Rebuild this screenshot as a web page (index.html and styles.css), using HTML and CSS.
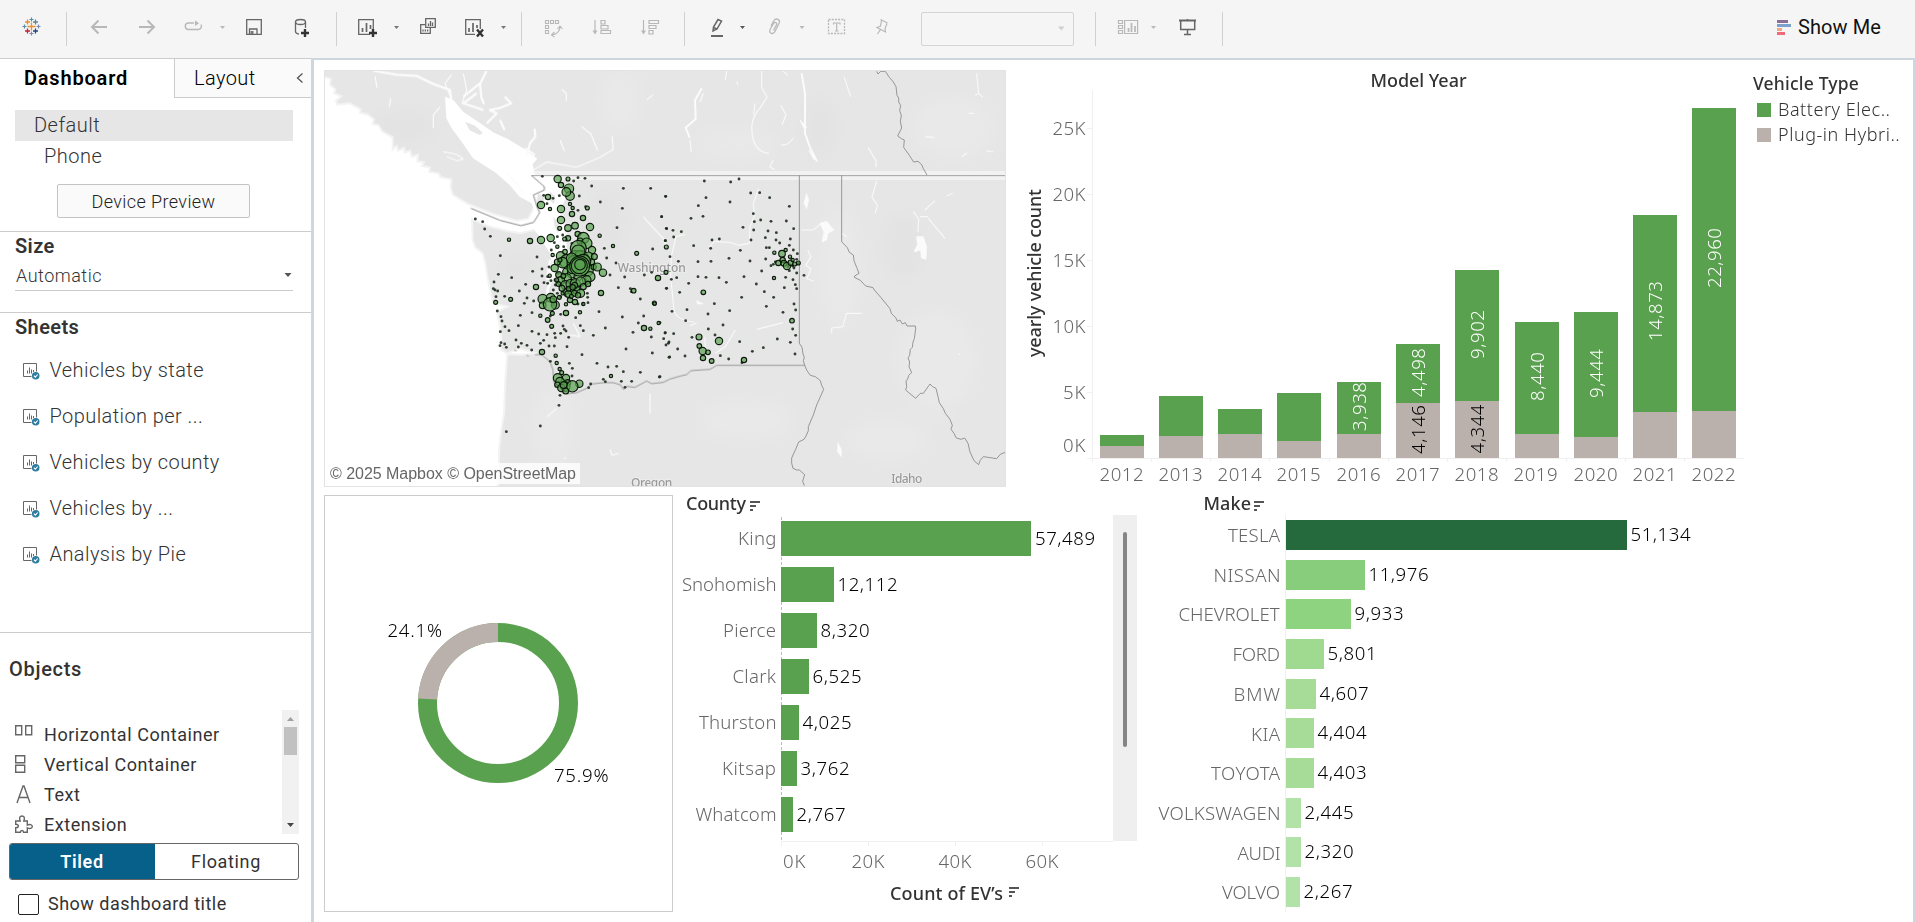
FILE: index.html
```html
<!DOCTYPE html>
<html lang="en">
<head>
<meta charset="utf-8">
<title>EV Dashboard</title>
<link rel="stylesheet" href="styles.css">
</head>
<body>
<header class="toolbar">
  <svg class="tool" width="66" height="58" viewBox="0 0 66 58" fill="none" stroke-width="1.6">
    <path stroke="#eb912c" d="M31.5 22.500v8M27.500 26.500h8"/>
    <path stroke="#eb912c" d="M27.500 19.500v5M25 22h5"/><path stroke="#59879b" d="M35.500 19.500v5M33 22h5"/>
    <path stroke="#c72035" d="M27.500 28.500v5M25 31h5"/><path stroke="#1f457e" d="M35.500 28.500v5M33 31h5"/>
    <path stroke="#5b8fa5" stroke-width="1.2" d="M31.500 17.500v4M29.500 19.500h4M24.500 24.500v4M22.500 26.500h4"/>
    <path stroke="#7d8bb0" stroke-width="1.2" d="M31.500 31.500v4M29.500 33.500h4M38.500 24.500v4M36.500 26.500h4"/>
  </svg>
  <i class="sep"></i>
  <svg class="tool faint" width="54" height="58" viewBox="67 0 54 58"><path stroke-width="2" d="M107 27H92M98.500 20.500L92 27l6.500 6.500"/></svg>
  <svg class="tool faint" width="49" height="58" viewBox="121 0 49 58"><path stroke-width="2" d="M139 27h15M147.500 20.500L154 27l-6.500 6.500"/></svg>
  <svg class="tool faint" width="62" height="58" viewBox="170 0 62 58"><path stroke-width="1.400" d="M194 23h-6a3.300 3.300 0 0 0 0 6.500h10a3.300 3.300 0 0 0 3-5"/><path class="solid" d="M193.500 23h2M195 20.300l4 2.900-4 2.900zM220 26h5l-2.500 3z"/></svg>
  <svg class="tool" width="46" height="58" viewBox="232 0 46 58"><path d="M246.700 19.700h14.600v14.600h-14.600zM249.500 34v-5h7.500v5"/><path class="solid" d="M250.500 31h3v3h-3z"/></svg>
  <svg class="tool" width="58" height="58" viewBox="278 0 58 58"><ellipse cx="300.500" cy="22" rx="5" ry="2.500"/><path d="M295.500 22v9.500q0 2 3.500 2.700M305.500 22v6"/><path class="ink" d="M305 29v8M301 33h8"/></svg>
  <i class="sep"></i>
  <svg class="tool" width="72" height="58" viewBox="337 0 72 58"><path d="M370 34.300h-11.300V19.700h14.600V29"/><path stroke-width="1.700" d="M362.500 32v-4M366.500 32v-9M370.500 29v-4"/><path class="ink" d="M373 29v8M369 33h8"/><path class="solid" d="M394 26h5l-2.500 3z"/></svg>
  <svg class="tool" width="42" height="58" viewBox="409 0 42 58"><path d="M425.700 18.700h9.600v8.600h-9.600zM425 24.700h-4.300v8.600h9.600V28"/><path d="M428.500 26v-2.500M430.500 26v-5M432.500 26v-3.500M423 31.500v-2M425.300 31.500v-2M427.600 31.500v-2"/></svg>
  <svg class="tool" width="70" height="58" viewBox="451 0 70 58"><path d="M475 34.300h-9.300V19.700h14.600V29"/><path stroke-width="1.700" d="M469 32v-4M473 32v-9M477 28v-3"/><path class="ink" d="M477 29.500l6 7M483 29.500l-6 7"/><path class="solid" d="M501 26h5l-2.500 3z"/></svg>
  <i class="sep"></i>
  <svg class="tool faint" width="56" height="58" viewBox="522 0 56 58"><path stroke-width="1.100" d="M545.500 20.500h3v3h-3zM550.500 20.500h3v3h-3zM555.500 20.500h3v3h-3zM545.500 25.500h3v3h-3zM545.500 30.500h3v3h-3zM560 26.500q0 7-8 8.500M557.500 29l2.500-3 2.500 3M554.500 32l-3 3 3 2"/></svg>
  <svg class="tool faint" width="48" height="58" viewBox="578 0 48 58"><path stroke-width="1.200" d="M595 20v12M601 20.500h4v3.500h-4zM601 25.500h7v3.500h-7zM601 30.500h9.500v3h-9.500z"/><path class="solid" d="M592.500 30.500h5l-2.500 4z"/></svg>
  <svg class="tool faint" width="58" height="58" viewBox="626 0 58 58"><path stroke-width="1.200" d="M643.500 20v12M649 20.500h9.500v3H649zM649 25.500h7v3h-7zM649 30.500h4v3.500h-4z"/><path class="solid" d="M641 30.500h5l-2.500 4z"/></svg>
  <i class="sep"></i>
  <svg class="tool" width="70" height="58" viewBox="685 0 70 58"><path stroke-width="1.500" d="M713 31l.5-4 4.500-7.500 3.500 1.500-4.500 8zM713.500 27.500l3.500 1.500"/><path class="base" d="M711 36h12"/><path class="solid dark" d="M740 26h5l-2.500 3z"/></svg>
  <svg class="tool faint" width="60" height="58" viewBox="755 0 60 58"><path stroke-width="1.300" d="M771 26l3-5.500c2-3 6.500-1 5.300 2.300L775 31.500c-1.800 3.500-6.500 2-5-1.700l3.500-6.300c1.500-2 4-.8 3 1.400l-3 5.600"/><path class="solid" d="M799.500 26h5l-2.500 3z"/></svg>
  <svg class="tool faint" width="46" height="58" viewBox="815 0 46 58"><path stroke-dasharray="2 1.200" d="M828.500 19.500h16v14h-16z"/><path stroke-width="1.200" d="M833.500 24.500v-1.500h6.500v1.500M836.700 23v8M835 31h3.500"/></svg>
  <svg class="tool faint" width="60" height="58" viewBox="861 0 60 58"><path stroke-width="1.200" d="M880.500 19.500l7 3.500M881.500 20.500l-1 5.500-3.500 1.500 8.500 4.500-.5-3.500 2-5M880.500 29.500l-3 4.500"/></svg>
  <span class="fit-select"><svg class="tool faint" width="12" height="30" viewBox="0 0 12 30"><path class="solid" d="M3 12.500h6.500l-3.200 4z" opacity=".6"/></svg></span>
  <i class="sep gap-left"></i>
  <svg class="tool faint" width="70" height="58" viewBox="1096 0 70 58"><path stroke-width="1.200" d="M1118.500 20.500h4v3h-4zM1118.500 25.500h4v3h-4zM1118.500 30.500h4v3h-4zM1124.600 20.500h13v13h-13z"/><path stroke-width="1.700" d="M1128.500 32v-4M1131.500 32v-9M1135 32v-6"/><path class="solid" d="M1151 26h5l-2.500 3z"/></svg>
  <svg class="tool" width="56" height="58" viewBox="1166 0 56 58"><path stroke-width="2" d="M1179 20.500h17"/><path stroke-width="1.500" d="M1180.700 21v8.500h14V21M1187.500 19v2M1187.500 30v4.500M1184 34.500h7"/></svg>
  <i class="sep"></i>
  <div class="show-me">
    <svg width="14" height="15" viewBox="0 0 14 15"><path fill="#8b6f97" d="M0 0h11v3H0z"/><path fill="#7ba2cc" d="M0 4h14v3H0z"/><path fill="#f2a67e" d="M0 8h5v3H0z"/><path fill="#f06a7c" d="M0 12h8v3H0z"/></svg>
    <span>Show Me</span>
  </div>
</header>
<div class="workspace">
  <aside class="side">
    <div class="tabs"><b class="tab-on">Dashboard</b><div class="tab-off"><span>Layout</span><svg width="8" height="12" viewBox="0 0 8 12"><path fill="none" stroke="#555" stroke-width="1.300" d="M6.500 1.500L1.500 6l5 4.500"/></svg></div></div>
    <section class="devices">
      <div class="device on">Default</div>
      <div class="device phone">Phone</div>
      <button class="preview">Device Preview</button>
    </section>
    <section class="size">
      <h3>Size</h3>
      <div class="dropdown"><span>Automatic</span><svg width="8" height="6" viewBox="0 0 8 6"><path fill="#555" d="M.5 1h7L4 5z"/></svg></div>
    </section>
    <section class="sheets">
      <h3>Sheets</h3>
      <ul>
        <li><svg class="sheet"><use href="#sheet"/></svg><span>Vehicles by state</span></li>
        <li><svg class="sheet"><use href="#sheet"/></svg><span>Population per ...</span></li>
        <li><svg class="sheet"><use href="#sheet"/></svg><span>Vehicles by county</span></li>
        <li><svg class="sheet"><use href="#sheet"/></svg><span>Vehicles by ...</span></li>
        <li><svg class="sheet"><use href="#sheet"/></svg><span>Analysis by Pie</span></li>
      </ul>
    </section>
    <section class="objects">
      <h3>Objects</h3>
      <div class="object-box">
        <ul>
          <li><svg class="obj" viewBox="0 0 20 20"><path d="M1.700 1.700h6v9h-6zM11.700 1.700h6v9h-6z"/></svg>Horizontal Container</li>
          <li><svg class="obj" viewBox="0 0 20 20"><path d="M1.700 1.700h9v7h-9zM1.700 11.200h9v7h-9z"/></svg>Vertical Container</li>
          <li><svg class="obj" viewBox="0 0 20 20"><path d="M3 19l6-17h1l6 17M5 13.500h9"/></svg>Text</li>
          <li><svg class="obj" viewBox="0 0 20 20"><path d="M1.700 8V7h4.500c-1.500-3.500 0-5 1.800-5s3.300 1.500 1.800 5h3.500v4.200c2.500-1.200 5-.6 5 1.300s-2.500 2.500-5 1.300V18.300H9.600c0-2.500-3.200-2.500-3.200 0H1.700v-4.500c3.500 0 3.500-3.600 0-3.600z"/></svg>Extension</li>
        </ul>
        <div class="scroll"><svg width="17" height="17" viewBox="0 0 17 17"><path fill="#a0a0a0" d="M5 11h7L8.500 7z"/></svg><i></i><svg width="17" height="17" viewBox="0 0 17 17"><path fill="#444" d="M5 6h7l-3.500 4z"/></svg></div>
      </div>
      <div class="mode"><b>Tiled</b><span>Floating</span></div>
      <label class="check"><i></i><span>Show dashboard title</span></label>
    </section>
  </aside>
  <main class="canvas">
    <div class="row">
      <svg class="map" width="682" height="417" viewBox="12 30 2046 1251">
        <defs><filter id="soft"><feGaussianBlur stdDeviation="24"/></filter><filter id="edge"><feGaussianBlur stdDeviation="1.500"/></filter></defs>
        <path fill="#e6e6e6" d="M12 30h2046v1251H12z"/>
        <g filter="url(#soft)" fill="#e9e9e9"><ellipse cx="900" cy="120" rx="60" ry="90"/><ellipse cx="1250" cy="250" rx="120" ry="40"/><ellipse cx="1560" cy="620" rx="60" ry="180"/><ellipse cx="1900" cy="200" rx="120" ry="90"/><ellipse cx="1850" cy="900" rx="120" ry="150"/><ellipse cx="1280" cy="1080" rx="140" ry="60"/><ellipse cx="1700" cy="1140" rx="130" ry="60"/><ellipse cx="700" cy="1100" rx="60" ry="120"/></g>
        <g filter="url(#soft)" fill="#e3e3e3"><ellipse cx="250" cy="200" rx="100" ry="50"/><ellipse cx="600" cy="620" rx="50" ry="50"/><ellipse cx="860" cy="480" rx="60" ry="100"/><ellipse cx="1500" cy="200" rx="50" ry="90"/><ellipse cx="1750" cy="560" rx="60" ry="100"/></g>
        <path fill="#f2f2f2" d="M640 333h1418v27H640z"/>
        <path fill="#fff" stroke="#f3f3f3" stroke-width="6" filter="url(#edge)" d="M0 48L32 56 30 74 46 88 42 100 64 108 48 122 52 134 90 130 100 136 122 148 120 158 144 164 162 178 158 192 176 196 186 214 218 232V268L230 258 234 272 252 264 254 278 270 272 276 290 294 284 292 304 312 306 306 318 330 322 328 336 356 340 362 352 394 358 392 380 398 404 440 430 480 446 520 462 590 482 625 476 645 436 700 430 730 470 740 530 700 545 690 570 672 530 640 510 600 520 560 512 510 500 470 484 456 478 458 540 466 562 488 580 496 610 502 650 512 700 520 730 562 740 530 756 538 790 544 830 542 868 560 880 600 866 650 880 600 884 562 882 556 960 552 1060 544 1110 538 1160 534 1285H0z"/>
        <path fill="#fff" filter="url(#edge)" d="M375 110l25 10 30 36 42 28 50 34 40 18 50 30 40 30-14 16 6 32 70 6 26 60-26 50 24 70 2 30 6 50-46 30-10-60-50-80 5-40-10-30-36-20-30-35-40-35-30-20-40-25-34-50-30-40-16-30z"/>
        <path fill="#e6e6e6" d="M435 185l30 12 24 22-10 6-30-14zM520 200l30 14-8 10-24-8zM655 400l20 12-6 20-20-8zM690 395l16 14-4 24-14-14zM700 470l18 20-4 30-10-20z"/>
        <g fill="none" stroke="#fbfbfb" stroke-linejoin="round" filter="url(#edge)">
          <path stroke-width="7" d="M160 32l70 12 60 4 50 24 50 18 4 30M500 32l-20 40 4 40 8 20M470 100l-40 30 60 20M500 190l30-30-20-10 30-6 34-14-20-20M540 180l14 30M480 70l-50 40M620 290l10-40 16-20-2-24M645 285l-30-20"/>
          <path stroke-width="3.500" d="M395 120l-20-50 20-26M430 40l10 50-14 40M340 205v-40l20-24M380 290l30 12 20-4M370 275l40 8 20 14M165 48l6 36M212 115l-4 26M640 330l40-24 90 16 70-30 40-24-4-40M785 200l28 22 20 50M720 240l14 34M725 88l14 12v24M980 120l20-16M970 470l36 40 28 30 4 20M560 335l50 60M680 1070l30-24M740 1195l-10 0M870 1168l6 18 20-6M990 1000v60M760 790l20 40-30-6"/>
          <path stroke-width="8" d="M720 540l-6 60-16 50-16 40 6 30M705 650l-16-20M735 560l14 40M690 600l-8 60M730 640l10 40"/>
          <g transform="translate(1020)">
            <path stroke-width="6" d="M125 85l-20 36 2 56-30 26 12 30M425 40l10 60v120l14 40 22 44"/>
            <path stroke-width="3.500" stroke="#f8f8f8" d="M130 100l-10 26M90 240l4 36M305 32v50l16 30-22 34q-30 30-22 80 8 50 50 54M285 130l-4 34M362 135l16 30-12 30M368 32l16 14M230 64l4 12M200 32l-4 28M340 300l-10 20 14 10M400 234q-16 24-36 20M624 262l24 40v20M950 40l6 60-10 6M955 100l14 12M552 50l20 60M905 290l16-12M980 272l20 4M650 362l-14 50 16 24-6 24M795 450l30-28M760 455l16 22-2 40M780 470h24M805 475l50 60M860 408l18-8M796 230l26 2M926 160h16M296 386l-16 44 4 36-14 34-2 50-34 6-20-8-50-4-16 16M424 510h36l26-22M74 524l-26 6-14 60-2 60 10 100q6 30 60 36M110 788l-20 10M226 810l-30 50-30 20M134 830l4 60M605 760h-46l-10 40-34 4v16M290 808l80-20M895 884l6-4M443 570l10 20-16 26 16 10-12 30 20 8M545 520l16 10"/>
            <path fill="#fbfbfb" stroke-width="2" d="M770 530h20l10 30-2 38-14-4-2-24-20 6 10-22zM480 490l20-6 22 26-18 10-4 20-14 6 6-30zM110 722l20 10h-18zM534 1148l10 20v22l-12-16zM440 400l6 20-6 26-8-16zM420 180l20 20-6 10zM446 270l20 20-4 10z"/>
          </g>
        </g>
        <g fill="none" stroke="#858585" stroke-width="3" stroke-linejoin="round">
          <path d="M453 445L540 481 603 497 641 487 659 458 651 440 640 405 673 390V380L634 346H2058"/>
          <path stroke-width="2.500" d="M583 870l6 3M620 886l6 2M645 884H665L690 905 699 930 701 965 715 990 740 1001 770 998 800 985 815 972 850 968H880L902 975 910 988 920 979 945 982 980 963 995 971 1030 967 1050 957 1085 947 1100 944 1112 932 1170 928 1190 916H1454"/>
          <g transform="translate(1020)" stroke-width="2.500">
            <path d="M418 346V850L426 862 429 882 433 892 430 902 434 916 441 932 451 946 466 950 481 962 485 976 491 988 483 1006 470 1035 460 1065 445 1100V1112L438 1128 432 1138 416 1146 407 1168 395 1194V1210L399 1225 410 1230H418L434 1244 428 1264 433 1277"/>
            <path d="M545 346V545L562 563 568 577 580 585 582 602 590 622 597 640 584 648 583 652 601 661 617 678 639 683 643 690 664 714 690 746 694 760 708 774 712 784 720 780 727 792 736 788 741 798H766L767 806 763 836 759 846 757 862 751 868 749 886 744 894 749 906 747 920 755 938 746 946 743 958 738 962 740 980 737 990 745 997 767 1015 781 1000H790L810 972 818 980 828 985 834 1010 838 1028 850 1046 856 1060 870 1078 877 1096 873 1108 882 1120 889 1134 903 1138 914 1134 924 1150 930 1176 942 1202 956 1214 960 1202 970 1190 984 1192 1010 1196 1022 1182 1036 1177"/>
            <path d="M650 34L654 42 662 34H676L688 52 700 66 708 80 711 106 716 114V126L722 136 719 152 724 166 721 184 725 204 713 228 724 236 733 240 731 262 748 286 761 306 774 304 785 314 790 326 801 345"/>
          </g>
        </g>
        <g class="place"><text x="893" y="637" textLength="204">Washington</text><text x="933" y="1281" textLength="124">Oregon</text><text x="1714" y="1268" textLength="93">Idaho</text></g>
        <g id="marks"></g>
        <path fill="#fff" fill-opacity=".8" d="M22 1209h758v63H22z"/>
        <text class="credit" x="30" y="1257" textLength="738">© 2025 Mapbox © OpenStreetMap</text>
        <path fill="none" stroke="#e3e3e3" stroke-width="3" d="M13.500 31.500h2043v1248h-2043z"/>
      </svg>
      <svg class="chart" width="738" height="417" viewBox="1006 70 738 417">
        <g class="axis-line"><path d="M1092.500 90v369M1087 458.500h656.500M1087 128.500h5M1087 194.500h5M1087 260.500h5M1087 326.500h5M1087 392.500h5M1092.500 458v4M1151.500 458v4M1210.500 458v4M1269.500 458v4M1329.500 458v4M1388.500 458v4M1447.500 458v4M1506.500 458v4M1566.500 458v4M1625.500 458v4M1684.500 458v4"/></g>
        <path class="ev" d="M1100 435h44v11h-44zM1159 396h44v40h-44zM1218 409h44v25h-44zM1277 393h44v48h-44zM1337 382h44v52h-44zM1396 344h44v59h-44zM1455 270h44v131h-44zM1515 322h44v112h-44zM1574 312h44v125h-44zM1633 215h44v197h-44zM1692 108h44v303h-44z"/>
        <path class="hy" d="M1100 446h44v12h-44zM1159 436h44v22h-44zM1218 434h44v24h-44zM1277 441h44v17h-44zM1337 434h44v24h-44zM1396 403h44v55h-44zM1455 401h44v57h-44zM1515 434h44v24h-44zM1574 437h44v21h-44zM1633 412h44v46h-44zM1692 411h44v47h-44z"/>
        <g class="head"><text x="1370.500" y="87" textLength="96">Model Year</text><text transform="translate(1040.500 357)rotate(-90)" textLength="168">yearly vehicle count</text></g>
        <g class="dim"><text x="1052.500" y="135" textLength="33">25K</text><text x="1052.500" y="201" textLength="33">20K</text><text x="1052.500" y="267" textLength="33">15K</text><text x="1052.500" y="333" textLength="33">10K</text><text x="1063" y="399" textLength="22.500">5K</text><text x="1063" y="452" textLength="22.500">0K</text>
        <text x="1099.500" y="481" textLength="44">2012</text><text x="1158.500" y="481" textLength="44">2013</text><text x="1217.500" y="481" textLength="44">2014</text><text x="1276.500" y="481" textLength="44">2015</text><text x="1336.500" y="481" textLength="44">2016</text><text x="1395.500" y="481" textLength="44">2017</text><text x="1454.500" y="481" textLength="44">2018</text><text x="1513.500" y="481" textLength="44">2019</text><text x="1573.500" y="481" textLength="44">2020</text><text x="1632.500" y="481" textLength="44">2021</text><text x="1691.500" y="481" textLength="44">2022</text></g>
        <g class="light"><text transform="translate(1366 431)rotate(-90)" textLength="49">3,938</text><text transform="translate(1425 397)rotate(-90)" textLength="49">4,498</text><text transform="translate(1484 359)rotate(-90)" textLength="49">9,902</text><text transform="translate(1544 401)rotate(-90)" textLength="49">8,440</text><text transform="translate(1603 398)rotate(-90)" textLength="49">9,444</text><text transform="translate(1662 341)rotate(-90)" textLength="60">14,873</text><text transform="translate(1721 288)rotate(-90)" textLength="60">22,960</text></g>
        <g class="val"><text transform="translate(1425 454)rotate(-90)" textLength="49">4,146</text><text transform="translate(1484 453.500)rotate(-90)" textLength="49">4,344</text></g>
      </svg>
      <div class="legend"><b>Vehicle Type</b><div><i class="key-ev"></i><span>Battery Elec..</span></div><div><i class="key-hy"></i><span>Plug-in Hybri..</span></div></div>
    </div>
    <div class="row second">
      <div class="pie"><svg class="chart" width="347" height="415" viewBox="325 496 347 415">
        <circle cx="498" cy="703" r="70.500" fill="none" stroke="#5aa14f" stroke-width="19"/>
        <path fill="none" stroke="#bab0ac" stroke-width="19" d="M427.600 699A70.500 70.500 0 0 1 498 632.500"/>
        <g class="val"><text x="387.500" y="637" textLength="54.500">24.1%</text><text x="554" y="782" textLength="54.500">75.9%</text></g>
      </svg></div>
      <svg class="chart" width="470" height="417" viewBox="673 495 470 417">
        <path stroke="#bbb" stroke-dasharray="3 2" d="M781.500 517v325"/>
        <path class="axis-line" d="M781 841.500h332M781.500 842v4M868.500 842v4M955.500 842v4M1042.500 842v4"/>
        <path class="ev" d="M781 521h250v35h-250zM781 567h53v35h-53zM781 613h36v35h-36zM781 659h28v35h-28zM781 705h18v35h-18zM781 751h16v35h-16zM781 797h12v35h-12z"/>
        <g class="head"><text x="686" y="510" textLength="60">County</text><text x="890" y="900" textLength="113">Count of EV’s</text></g>
        <path fill="#555" d="M750 501h10v2h-10zM750 505h6v2h-6zM750 509h3v2h-3zM1009 887h10v2h-10zM1009 891h6v2h-6zM1009 895h3v2h-3z"/>
        <g class="dim"><text x="738" y="545" textLength="38.500">King</text><text x="682" y="591" textLength="94.500">Snohomish</text><text x="723" y="637" textLength="53">Pierce</text><text x="732.500" y="683" textLength="43.500">Clark</text><text x="699" y="729" textLength="77.500">Thurston</text><text x="722" y="775" textLength="54">Kitsap</text><text x="695.500" y="821" textLength="81">Whatcom</text>
        <text x="783" y="868" textLength="22.500">0K</text><text x="851.500" y="868" textLength="33">20K</text><text x="938.500" y="868" textLength="33">40K</text><text x="1025.500" y="868" textLength="33">60K</text></g>
        <g class="val"><text x="1035" y="545" textLength="60">57,489</text><text x="837.500" y="591" textLength="60">12,112</text><text x="820.500" y="637" textLength="49">8,320</text><text x="812.500" y="683" textLength="49">6,525</text><text x="802.500" y="729" textLength="49">4,025</text><text x="800.500" y="775" textLength="49">3,762</text><text x="796.500" y="821" textLength="49">2,767</text></g>
        <path fill="#efefef" d="M1113 515h24v326h-24z"/><rect x="1123" y="532" width="4" height="215" rx="2" fill="#858585"/>
      </svg>
      <svg class="chart" width="600" height="417" viewBox="1143 495 600 417">
        <path class="axis-line" d="M1285.500 515v397"/>
        <path fill="#246a3d" d="M1286 520h341v30h-341z"/><path fill="#88cd7b" d="M1286 560h79v30h-79z"/><path fill="#8ed380" d="M1286 599h65v30h-65z"/><path fill="#a0da90" d="M1286 639h38v30h-38z"/><path fill="#a7dc98" d="M1286 679h30v30h-30zM1286 718h28v30h-28zM1286 758h28v30h-28z"/><path fill="#b3e2a8" d="M1286 798h15v30h-15zM1286 837h15v30h-15zM1286 877h14v30h-14z"/>
        <g class="head"><text x="1203.500" y="510" textLength="47.500">Make</text></g>
        <path fill="#555" d="M1254 501h10v2h-10zM1254 505h6v2h-6zM1254 509h3v2h-3z"/>
        <g class="dim"><text x="1228" y="542" textLength="52">TESLA</text><text x="1213.500" y="582" textLength="67">NISSAN</text><text x="1178.500" y="621" textLength="101">CHEVROLET</text><text x="1232.500" y="661" textLength="47.500">FORD</text><text x="1233.500" y="701" textLength="46.500">BMW</text><text x="1251" y="741" textLength="29">KIA</text><text x="1211" y="780" textLength="69">TOYOTA</text><text x="1158.500" y="820" textLength="122">VOLKSWAGEN</text><text x="1237.500" y="860" textLength="43">AUDI</text><text x="1222" y="899" textLength="58">VOLVO</text></g>
        <g class="val"><text x="1630.500" y="541" textLength="60">51,134</text><text x="1368.500" y="581" textLength="60">11,976</text><text x="1354.500" y="620" textLength="49">9,933</text><text x="1327.500" y="660" textLength="49">5,801</text><text x="1319.500" y="700" textLength="49">4,607</text><text x="1317.500" y="739" textLength="49">4,404</text><text x="1317.500" y="779" textLength="49">4,403</text><text x="1304.500" y="819" textLength="49">2,445</text><text x="1304.500" y="858" textLength="49">2,320</text><text x="1303.500" y="898" textLength="49">2,267</text></g>
      </svg>
    </div>
  </main>
</div>
<svg class="defs"><symbol id="sheet" viewBox="0 0 17 17"><path fill="none" stroke="#666" d="M8.500 13.500h-8v-13h13v8"/><path stroke="#666" d="M4.500 10.500v-3M6.500 10.500v-6M8.500 10.500v-4M10.500 9v-2"/><circle cx="12.700" cy="12.700" r="3.800" fill="#2e7da1"/><path fill="none" stroke="#fff" stroke-width="1.100" d="M10.900 12.700l1.400 1.400 2.400-2.600"/></symbol></svg>
<script src="map.js"></script>
</body>
</html>
```
FILE: styles.css
```css
* { box-sizing: border-box; }
body { margin: 0; width: 1915px; height: 922px; overflow: hidden; background: #fff; font-family: Roboto, "Open Sans", sans-serif; font-weight: 300; color: #333; }
ul { list-style: none; margin: 0; padding: 0; }
svg { display: block; flex: none; }
.defs { width: 0; height: 0; }
.toolbar { display: flex; align-items: center; height: 58px; background: #f5f5f5; }
.tool { fill: none; stroke: #666; stroke-width: 1.3; }
.tool.faint { stroke: #b8b8b8; }
.tool .solid { fill: #777; stroke: none; }
.tool .solid.dark { fill: #555; }
.tool.faint .solid { fill: #b8b8b8; }
.tool .ink { stroke: #333; stroke-width: 2.4; }
.tool .base { stroke: #666; stroke-width: 2; }
.sep { flex: none; width: 1px; height: 34px; background: #d0d0d0; }
.gap-left { margin-left: 21px; }
.fit-select { display: flex; align-items: center; justify-content: flex-end; width: 153px; height: 34px; border: 1px solid #d4d4d4; border-radius: 2px; padding-right: 6px; }
.show-me { display: flex; align-items: center; gap: 7px; margin: 0 0 4px 554px; height: 50px; font-size: 20px; font-weight: 400; letter-spacing: .1px; color: #111; }
.workspace { display: flex; height: 864px; }
.side { width: 311px; border-top: 1px solid #ccc; font-size: 20px; }
.tabs { display: flex; height: 39px; font-size: 20px; color: #000; }
.tab-on { width: 174px; padding: 5px 0 0 24px; line-height: 28px; font-weight: 600; letter-spacing: .8px; }
.tab-off { display: flex; flex: 1; justify-content: space-between; padding: 5px 7px 0 19px; border: solid #ccc; border-width: 0 0 1px 1px; background: #fafafa; line-height: 28px; font-weight: 300; letter-spacing: .4px; }
.tab-off svg { margin-top: 8px; }
.devices { height: 134px; padding: 12px 18px 0 15px; border-bottom: 1px solid #ccc; }
.device { height: 31px; padding-left: 19px; line-height: 30px; letter-spacing: .5px; color: #333; }
.device.on { background: #e6e6e6; }
.device.phone { padding-left: 29px; }
.preview { display: block; width: 193px; height: 34px; margin: 12px 0 0 42px; border: 1px solid #c4c4c4; border-radius: 2px; background: #fafafa; font: 300 18px Roboto, sans-serif; letter-spacing: .4px; color: #222; }
h3 { margin: 0; font-size: 20px; line-height: 28px; font-weight: 600; color: #333; }
.size { height: 81px; padding: 0 18px 0 15px; border-bottom: 1px solid #ccc; }
.size h3 { letter-spacing: .4px; }
.dropdown { display: flex; align-items: center; justify-content: space-between; height: 31px; padding: 0 1px; border-bottom: 1px solid #ccc; font-size: 18px; letter-spacing: .5px; color: #333; }
.sheets { height: 320px; padding: 0 15px; border-bottom: 1px solid #ccc; letter-spacing: .42px; }
.sheets h3 { letter-spacing: .4px; }
.sheets ul { padding-top: 6px; }
.sheets li { display: flex; align-items: center; height: 46px; padding-left: 8px; gap: 9.5px; }
.sheet { width: 17px; height: 17px; margin-top: 3px; }
.objects { padding: 22px 12px 0 9px; }
.objects h3 { font-weight: 500; letter-spacing: .7px; }
.object-box { display: flex; justify-content: space-between; height: 124px; margin-top: 27px; overflow: hidden; font-size: 18px; font-weight: 400; letter-spacing: .55px; }
.object-box ul { padding: 9px 0 0 5px; }
.object-box li { display: flex; align-items: center; gap: 10px; height: 30px; }
.obj { width: 20px; height: 20px; fill: none; stroke: #666; stroke-width: 1.400; }
.scroll { display: flex; flex-direction: column; align-items: center; width: 17px; background: #f1f1f1; }
.scroll i { width: 13px; height: 28px; margin-bottom: 62px; background: #c1c1c1; }
.mode { display: flex; height: 37px; margin-top: 9px; border: 1px solid #666; border-radius: 3px; overflow: hidden; font-size: 18px; line-height: 35px; font-weight: 400; letter-spacing: .65px; text-align: center; }
.mode b { width: 146px; margin: -1px; padding-top: 1px; background: #06608a; color: #fff; font-weight: 600; }
.mode span { flex: 1; }
.check { display: flex; align-items: center; gap: 10px; margin: 14px 0 0 9px; font-size: 18px; line-height: 19px; font-weight: 400; letter-spacing: .5px; }
.check span { margin: -2px 0 0 -1px; }
.check i { width: 21px; height: 21px; border: 1px solid #222; border-radius: 2px; }
.canvas { flex: 1; padding: 10px 0 0 10px; border: solid #ccd7e0; border-width: 2px 2px 0 3px; }
.row { display: flex; }
.second { margin-top: 8px; }
.pie { width: 349px; height: 417px; border: 1px solid #ccc; }
.chart { overflow: visible; font: 300 18.6px "Noto Sans", "Open Sans", sans-serif; }
.ev { fill: #5aa14f; }
.hy { fill: #bab0ac; }
.axis-line { fill: none; stroke: #f0f0f0; }
.head { fill: #333; font-size: 18px; font-weight: 500; }
.dim { fill: #666; }
.light { fill: #fff; }
.val { fill: #000; }
.legend { padding: 1px 0 0 9px; font: 300 18px/25px "Noto Sans", "Open Sans", sans-serif; letter-spacing: .55px; white-space: nowrap; color: #333; }
.legend b { display: block; height: 26px; font-size: 17.500px; font-weight: 500; letter-spacing: .2px; }
.legend div { display: flex; align-items: center; gap: 7px; height: 25px; padding-left: 4px; }
.legend i { width: 14px; height: 14px; }
.key-ev { background: #5aa14f; }
.key-hy { background: #bab0ac; }
.place { fill: #999; stroke: #efefef; stroke-width: 5px; paint-order: stroke; font: 500 36px "Noto Sans", sans-serif; }
.credit { fill: #666; font: 400 48px "Liberation Sans", sans-serif; }
.dot { fill: #1d2b1d; fill-opacity: .9; }
.bubble { fill: #59a14f; fill-opacity: .7; stroke: #061006; stroke-opacity: .95; stroke-width: 3.4; }
```
FILE: map.js
```js
// Vehicle counts by postal area: small places as dots, larger ones as [x, y, radius].
const west = "667,349 774,353 795,355 761,363 815,378 910,385 992,385 1037,409 841,426 907,445 778,408 718,407 699,415 671,406 681,431 774,451 797,440 1025,470 891,503 1039,505 466,477 488,485 494,507 511,529 1036,542 998,567 853,565 860,594 888,609 541,587 651,591 694,570 638,634 666,627 687,621 535,643 575,653 522,666 617,673 520,686 533,693 525,690 528,710 554,709 598,693 621,714 613,730 641,723 532,753 543,770 546,783 555,800 567,812 541,815 588,840 604,850 543,848 554,852 540,857 559,862 595,861 621,856 635,870 595,797 601,766 636,758 636,814 656,822 681,824 671,841 661,850 687,858 703,858 704,820 706,833 722,820 738,813 746,832 741,860 729,798 733,808 781,797 790,812 820,826 856,804 837,755 907,771 767,773 722,763 691,768 786,884 748,910 757,925 831,910 864,921 890,919 910,935 961,937 904,964 935,964 1018,951 997,879 918,867 939,817 994,831 955,789 971,768 961,717 895,683 914,651 973,645 995,637 870,645 1036,818 1031,836 1045,850 691,904 756,948 720,1006 717,1036 661,1098 559,1115 850,958 856,965 812,972 806,983 915,982 931,686 934,695 1039,685 1047,892 804,728 774,732 788,732 712,530 728,525 703,548 683,650 666,648 693,662 672,668 683,670 700,690 712,700 722,710 736,706 766,690 706,675 714,640 705,660 783,520 756,550 731,560 740,540 802,700 803,712 700,735";
const east = "133,363 212,366 237,357 17,409 138,413 115,437 210,426 272,399 299,398 329,413 388,439 5,470 93,475 129,469 280,461 283,485 302,480 333,484 379,483 20,506 39,511 64,515 41,531 249,502 281,510 324,513 349,518 401,506 16,542 156,540 178,537 101,557 152,565 241,571 273,540 316,533 348,540 359,549 391,537 388,556 400,570 412,581 319,563 328,563 30,590 55,604 114,605 153,604 207,595 270,603 317,597 305,633 333,617 34,658 50,653 114,650 138,652 177,653 199,667 252,650 289,672 377,652 399,659 410,639 432,646 86,670 20,685 59,697 373,683 406,674 410,686 313,695 245,712 341,712 163,731 81,749 36,754 77,782 144,762 209,752 319,739 369,757 402,732 407,750 145,807 189,795 0,788 15,819 41,821 96,832 165,825 239,845 352,837 398,807 407,826 391,847 310,863 277,874 53,867 27,846 29,891 75,888 181,887 206,897 405,882 246,908 18,855 0,950 340,613 346,606 362,603 384,620 398,618 410,598 415,610 388,632 402,624";
const bubbles = [
 [713,357,11],[744,357,6],[723,375,8],[747,386,14],[750,408,13],[739,396,13],[684,411,8],[663,435,11],[690,447,5],[723,447,11],[750,432,5],[758,444,5],[802,444,6],[756,462,8],[789,474,8],[723,480,11],[719,505,6],[744,504,10],[765,497,10],[810,501,11],[839,527,5],[879,558,5],[567,539,5],[630,543,8],[663,540,11],[692,534,11],[744,535,8],[734,537,6],[773,522,8],[790,534,17],[780,543,9],[800,550,16],[816,570,11],[775,565,24],[722,588,13],[735,575,7],[742,605,22],[728,608,16],[712,606,9],[704,624,11],[765,590,18],[785,592,20],[778,586,14],[805,590,14],[823,590,9],[815,606,9],[800,630,20],[821,621,8],[832,621,12],[849,638,11],[810,650,15],[800,660,13],[716,644,9],[740,636,12],[756,640,14],[774,650,12],[740,655,14],[722,662,12],[736,675,13],[752,672,14],[766,671,15],[782,665,14],[790,680,9],[804,672,8],[768,690,12],[752,692,10],[737,694,9],[726,685,9],[745,702,10],[763,700,9],[782,700,12],[715,672,7],[710,660,6],[774,706,8],[843,699,8],[648,681,8],[750,720,8],[765,726,8],[754,709,6],[738,733,5],[790,732,5],[668,717,14],[692,713,13],[668,736,10],[706,735,12],[690,733,20],[700,718,10],[718,712,6],[738,759,8],[780,757,5],[697,760,6],[683,780,7],[661,767,5],[695,799,6],[572,718,6],[527,727,6],[950,580,6],[1014,654,8],[1038,637,6],[1039,561,6],[941,692,7],[1003,729,6],[972,804,8],[991,806,5],[1016,789,5],[1004,731,5],[666,876,8],[707,887,5],[710,909,5],[719,927,5],[725,938,6],[873,948,5],[713,954,13],[738,954,11],[720,965,13],[712,974,8],[743,968,9],[778,971,11],[736,980,14],[757,979,17],[724,984,11],[737,993,9],[731,975,10],[712,560,5],[720,600,6],[698,585,5],[689,647,5],[730,648,7],[728,700,5],[764,676,9],[746,686,7],[758,682,8],[775,575,20],[765,610,24],[790,605,22],[755,595,16],[757,625,16],[779,618,30],[778,617,24],[780,614,16],
 [1386,581,10],[1363,578,5],[1397,570,5],[1410,590,5],[1375,609,8],[1388,600,8],[1392,610,9],[1401,618,11],[1412,608,8],[1424,612,6],[1435,609,6],[1418,600,5],[1362,654,5],[1150,697,7],[1416,782,7],[1137,831,9],[1197,843,11],[1138,858,7],[1148,873,11],[1164,877,7],[1149,894,8],[1175,903,7],[1272,900,8]
];
const layer = document.getElementById("marks");
function mark(x, y, r, name) {
  const c = document.createElementNS("http://www.w3.org/2000/svg", "circle");
  c.setAttribute("cx", x); c.setAttribute("cy", y); c.setAttribute("r", r);
  c.setAttribute("class", name);
  layer.appendChild(c);
}
for (const [list, shift] of [[west, 0], [east, 1020]]) {
  for (const pair of list.split(" ")) {
    const [x, y] = pair.split(",").map(Number);
    mark(x + shift, y, 4.3, "dot");
  }
}
for (const [x, y, r] of bubbles) mark(x, y, r, "bubble");
```
